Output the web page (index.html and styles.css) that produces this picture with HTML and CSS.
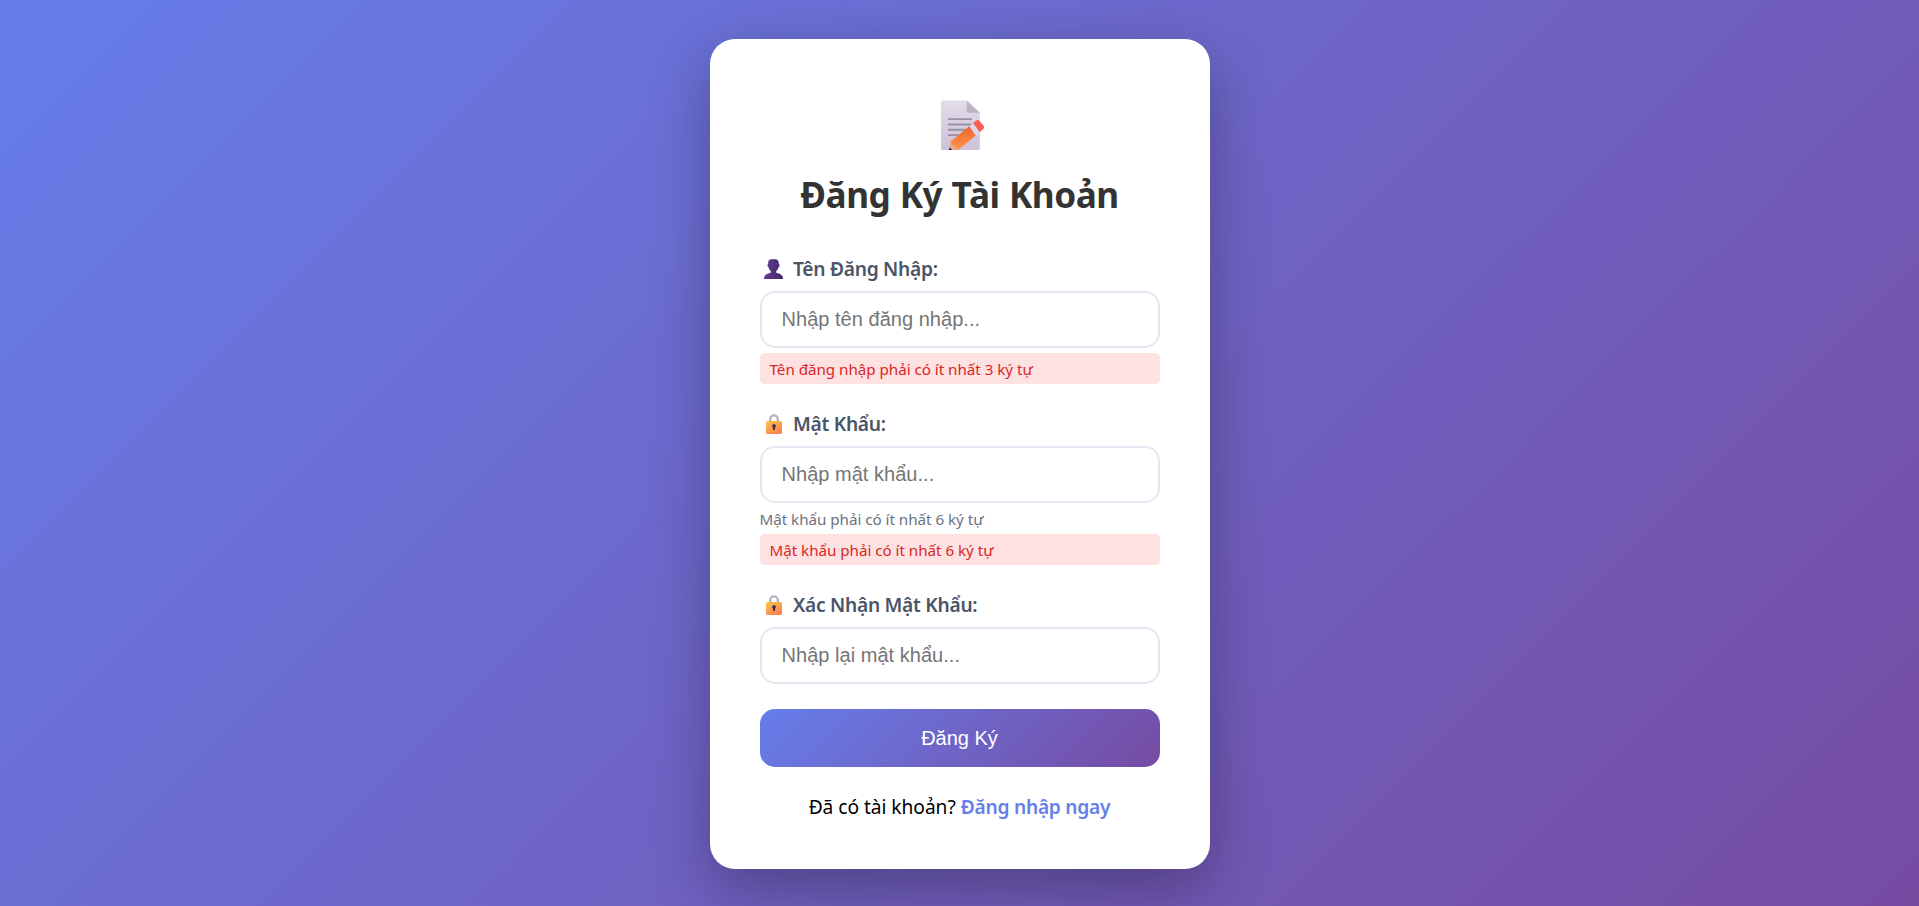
FILE: index.html
```html
<!DOCTYPE html>
<html lang="vi">
<head>
<meta charset="utf-8">
<title>Đăng Ký Tài Khoản</title>
<link rel="stylesheet" href="styles.css">
</head>
<body>
<svg width="0" height="0" class="defs" aria-hidden="true">
  <defs>
    <linearGradient id="lock-body" x1="0" y1="0" x2="0.6" y2="1"><stop offset="0" stop-color="#fbc548"/><stop offset="1" stop-color="#fb8353"/></linearGradient>
    <symbol id="lock" viewBox="0 0 16 20">
      <path d="M4.200 9V5.200a3.800 3.800 0 0 1 7.600 0V9" fill="none" stroke="#b7b1c0" stroke-width="2.400"/>
      <rect x="0" y="7" width="16" height="13" rx="1.500" fill="url(#lock-body)"/>
      <path d="M8 10a2 2 0 0 1 1 3.700V16H7v-2.300A2 2 0 0 1 8 10z" fill="#463449"/>
    </symbol>
  </defs>
</svg>
<main class="card">
  <header class="header">
    <svg class="memo" viewBox="0 0 42 50" preserveAspectRatio="none">
      <defs>
        <linearGradient id="paper" x1="0" y1="0" x2="0" y2="1"><stop offset="0" stop-color="#e2dbe9"/><stop offset="1" stop-color="#cfc2d8"/></linearGradient>
        <linearGradient id="fold" x1="0" y1="1" x2="1" y2="0"><stop offset="0" stop-color="#b5a9ba"/><stop offset="1" stop-color="#d0c8d5"/></linearGradient>
        <linearGradient id="pencil" x1="0" y1="0" x2="0" y2="1"><stop offset="0" stop-color="#ef6434"/><stop offset="1" stop-color="#ff9645"/></linearGradient>
      </defs>
      <path d="M1.500 0.500H25L37.500 12.500V47.500a1.500 1.500 0 0 1-1.500 1.500h-34.500A1.500 1.500 0 0 1 0 47.500V2A1.500 1.500 0 0 1 1.500.5z" fill="url(#paper)"/>
      <path d="M25 .5L37.500 12.500H26A1 1 0 0 1 25 11.500z" fill="url(#fold)"/>
      <path d="M6.700 18.700H30M6.700 24H30M6.700 29.200H24M6.700 34.500H19" stroke="#9a92a3" stroke-width="1.800"/>
      <path d="M9.200 40.500L16 49H8L8.300 46z" fill="#dfa98b"/>
      <path d="M8.300 46.300L10.800 49H7.800z" fill="#3d1c3b"/>
      <path d="M27.400 25.400L33.600 34.800L16.300 49L9 41z" fill="url(#pencil)"/>
      <path d="M31 22.600L37.400 31.600L33.600 34.800L27.400 25.800z" fill="#e1d7ed"/>
      <path d="M31 22.600L34.200 20Q35.700 18.900 37 20.300L41.400 25.500Q42.400 27 41 28.300L37.400 31.600z" fill="#fb5f50"/>
    </svg>
    <h1 class="title">Đăng Ký Tài Khoản</h1>
  </header>
  <form class="form">
    <div class="group">
      <label class="label" for="user">
        <svg class="icon person" viewBox="0 0 19 20"><defs><linearGradient id="skin"><stop offset="0" stop-color="#623c91"/><stop offset="1" stop-color="#42266a"/></linearGradient></defs><path d="M7 .3H12Q14.800 .8 14.800 5c1 0 .9 3-.3 3.300-.3 1.800-1.200 3-2.300 3.800v1.700c4 .7 6.300 2.200 6.800 5.200v1H0v-1c.5-3 2.800-4.500 6.800-5.200v-1.700C5.700 11.300 4.800 10.100 4.500 8.300 3.300 8 3.200 5 4.200 5 4 2 5 .6 7 .3z" fill="url(#skin)"/></svg>
        <span class="label-text">Tên Đăng Nhập:</span>
      </label>
      <input class="input" id="user" type="text" placeholder="Nhập tên đăng nhập...">
      <div class="error">Tên đăng nhập phải có ít nhất 3 ký tự</div>
    </div>
    <div class="group">
      <label class="label" for="pass"><svg class="icon lock"><use href="#lock"/></svg><span class="label-text">Mật Khẩu:</span></label>
      <input class="input" id="pass" type="password" placeholder="Nhập mật khẩu...">
      <div class="hint">Mật khẩu phải có ít nhất 6 ký tự</div>
      <div class="error flush">Mật khẩu phải có ít nhất 6 ký tự</div>
    </div>
    <div class="group last">
      <label class="label" for="again"><svg class="icon lock"><use href="#lock"/></svg><span class="label-text">Xác Nhận Mật Khẩu:</span></label>
      <input class="input" id="again" type="password" placeholder="Nhập lại mật khẩu...">
    </div>
    <button class="submit" type="button">Đăng Ký</button>
  </form>
  <p class="footer">Đã có tài khoản? <a class="link" href="#">Đăng nhập ngay</a></p>
</main>
</body>
</html>
```
FILE: styles.css
```css
* { box-sizing: border-box; margin: 0; padding: 0; }
body {
  height: 906px;
  overflow: hidden;
  display: flex;
  justify-content: center;
  align-items: flex-start;
  padding-top: 39px;
  font-family: "Noto Sans", "Open Sans", sans-serif;
  background: linear-gradient(135deg, #667eea 0%, #764ba2 100%);
}
.defs { position: absolute; }
.card {
  width: 500px;
  height: 830px;
  padding: 61px 50px 0;
  border-radius: 25px;
  background: #fff;
  box-shadow: 0 20px 60px rgba(0, 0, 0, 0.3);
}
.header { display: flex; flex-direction: column; align-items: center; }
.memo { width: 43.5px; height: 51px; margin-left: 6px; }
.title {
  margin-top: 19px;
  font-size: 35.2px;
  line-height: 48px;
  font-weight: 700;
  color: #333;
  white-space: nowrap;
  letter-spacing: -0.5px;
  word-spacing: 0.8px;
}
.form { display: flex; flex-direction: column; padding-top: 37px; }
.group { display: flex; flex-direction: column; margin-bottom: 26px; }
.group.last { margin-bottom: 25px; }
.label {
  display: flex;
  align-items: center;
  height: 28px;
  margin-bottom: 8px;
  font-size: 19.2px;
  font-weight: 600;
  color: #4a5568;
  white-space: nowrap;
  letter-spacing: -0.27px;
}
.label-text { padding-bottom: 2px; padding-left: 0.5px; }
.icon { flex: none; margin-left: 4px; }
.person { width: 19px; height: 20px; margin-right: 10px; }
.lock { width: 16px; height: 20px; margin-left: 6px; margin-right: 11px; }
.input {
  width: 100%;
  height: 57px;
  padding: 0 20px;
  border: 2px solid #e2e8f0;
  border-radius: 15px;
  font-family: "Liberation Sans", Arial, sans-serif;
  font-size: 20px;
  letter-spacing: 0.03px;
  background: #fff;
}
.input::placeholder { color: #757575; }
.error {
  height: 31px;
  margin-top: 5px;
  padding: 0 10px;
  border-radius: 5px;
  background: #fee2e2;
  color: #dc2626;
  font-size: 15.2px;
  line-height: 32px;
  letter-spacing: -0.03px;
}
.hint { height: 31px; font-size: 15.2px; line-height: 33px; color: #6b7280; letter-spacing: -0.03px; }
.flush { margin-top: 0; }
.submit {
  height: 58px;
  border: 0;
  border-radius: 15px;
  background: linear-gradient(135deg, #667eea 0%, #764ba2 100%);
  color: #fff;
  font-family: "Liberation Sans", Arial, sans-serif;
  font-size: 20px;
}
.footer { margin-top: 27px; font-size: 19.2px; line-height: 26px; text-align: center; color: #000; white-space: nowrap; letter-spacing: -0.05px; }
.link { color: #667eea; font-weight: 600; text-decoration: none; letter-spacing: -0.25px; }
```
